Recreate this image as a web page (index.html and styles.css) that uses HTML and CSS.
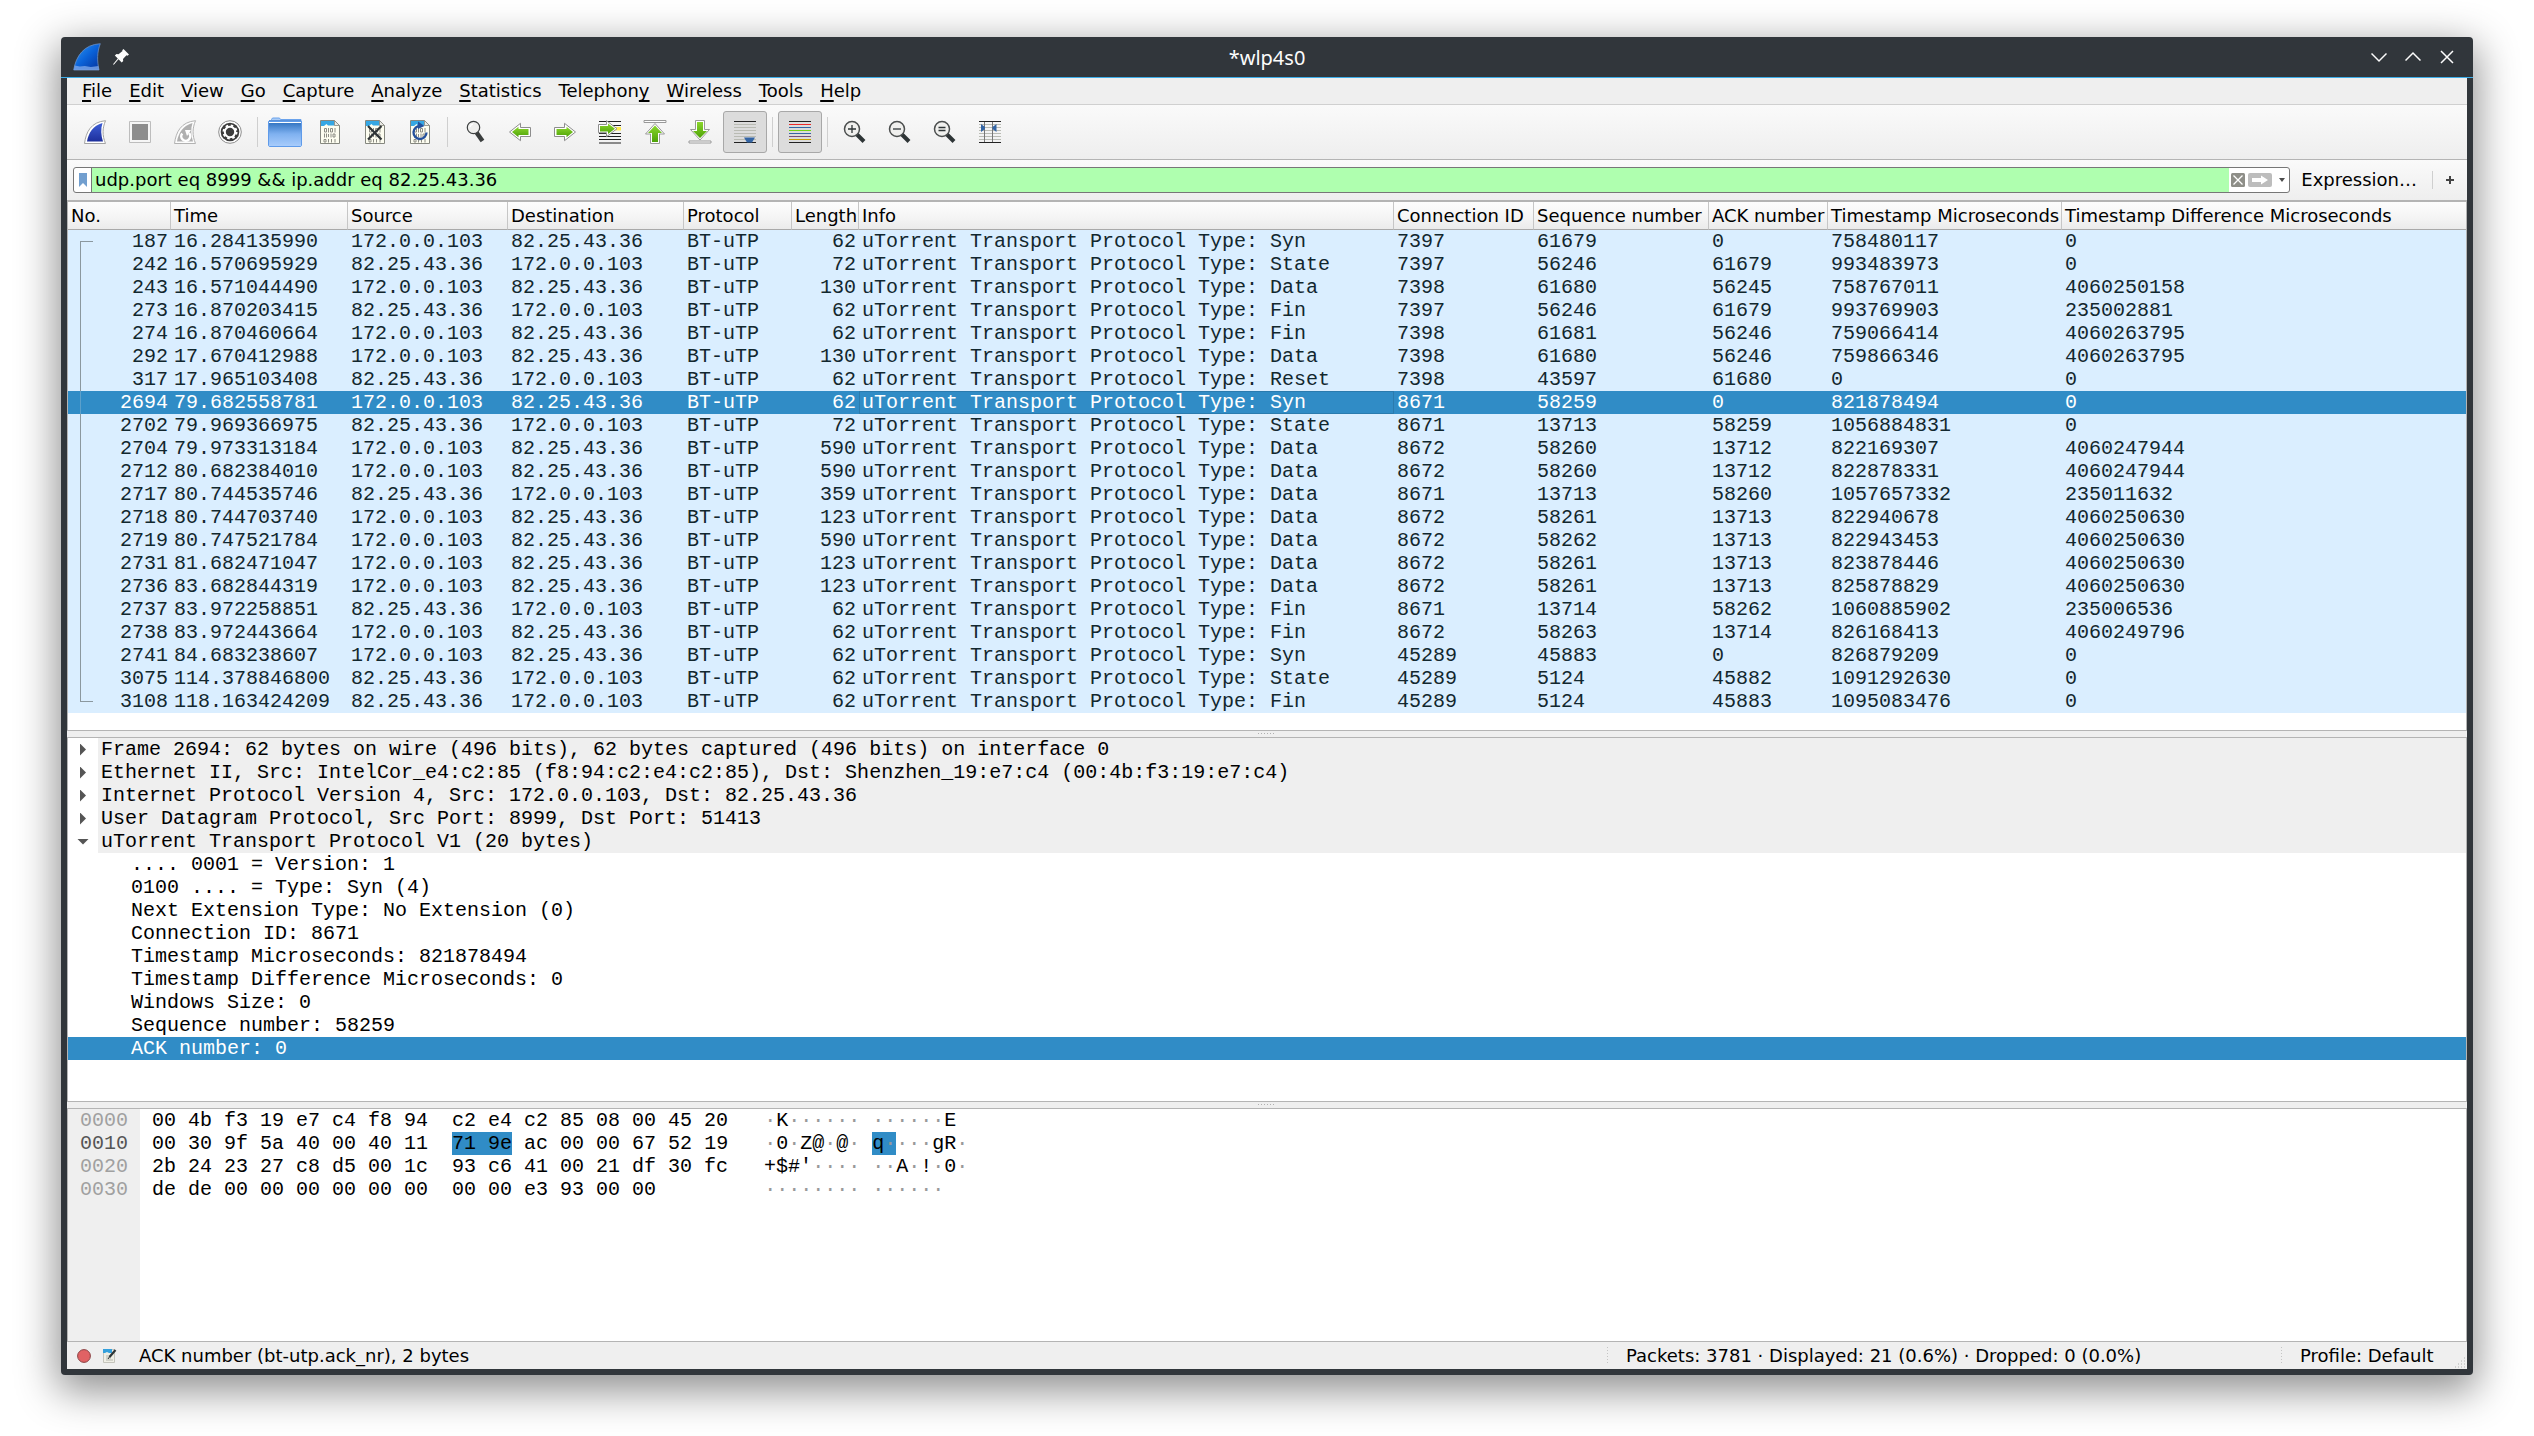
FILE: index.html
```html
<!DOCTYPE html>
<html lang="en">
<head>
<meta charset="utf-8">
<title>*wlp4s0</title>
<link rel="stylesheet" href="styles.css">
</head>
<body>
<svg class="defs" aria-hidden="true">
  <defs>
    <linearGradient id="fin-blue" x1="0" y1="0" x2="1" y2="1"><stop offset="0" stop-color="#2f9bf5"/><stop offset=".5" stop-color="#0a62d8"/><stop offset="1" stop-color="#04309a"/></linearGradient>
    <linearGradient id="fin-start" x1="0" y1="0" x2="0" y2="1"><stop offset="0" stop-color="#3d5ed6"/><stop offset="1" stop-color="#1d2f9c"/></linearGradient>
    <linearGradient id="folder" x1="0" y1="0" x2="0" y2="1"><stop offset="0" stop-color="#2c6fbd"/><stop offset=".5" stop-color="#7fb1f0"/><stop offset="1" stop-color="#a9cdfc"/></linearGradient>
    <linearGradient id="green" x1="0" y1="0" x2="0" y2="1"><stop offset="0" stop-color="#8bd62c"/><stop offset="1" stop-color="#4ea208"/></linearGradient>
    <symbol id="fin" viewBox="0 0 24 24"><path d="M1.500 23.500C3 12 8 2 22.500 .7 19.500 8 19 15 22.500 23.500z" fill="#fff" stroke="#a3a3a3"/></symbol>
    <symbol id="sheet" viewBox="0 0 24 24">
      <path d="M2.500 .5h14l5 5v18h-19z" fill="#fdfdf0" stroke="#85877f"/>
      <path d="M3 1h13.500v4.500H10L8.500 4 6 6H3z" fill="#35a7e4"/>
      <path d="M16.500 .5v5h5z" fill="#e9e9e4" stroke="#85877f" stroke-width=".8"/>
      <g fill="none" stroke="#8c8c84"><path d="M6.500 8.500h2v3.500h-2zM10.500 8v4.500M12.500 8.500h2v3.500h-2zM17 8v4.500M6.500 13.500v4M8.500 13.500v4M10.500 14v3M13 13.500v4M15 14h2v3h-2zM6 19.500h2v2.500H6zM10.500 19v3.500M13.500 19v3.500M17 19v3.500"/></g>
    </symbol>
    <symbol id="arrow-right" viewBox="0 0 24 20"><path d="M1.500 5.500h10V1.300L22.500 10 11.500 18.700V14.500h-10z" fill="#fff" stroke="#8d8d8d"/><path d="M3.500 7h10V4.800l6.500 5.200-6.500 5.200V13h-10z" fill="url(#green)"/></symbol>
    <symbol id="lens" viewBox="0 0 24 24"><path d="M13.500 14l7.500 7.500" stroke="#2e3436" stroke-width="4" stroke-linecap="butt"/><circle cx="9" cy="9" r="7.500" fill="#f0f0ee" stroke="#4b4e4e" stroke-width="1.500"/></symbol>
  </defs>
</svg>

<div class="window">
  <header class="titlebar">
    <div class="title-left">
      <svg width="28" height="28" viewBox="0 0 28 28"><path d="M.7 27C3 13 11 1.500 27.300 .7 24 9 24 18 26 27z" fill="url(#fin-blue)" stroke="#6d8fc0" stroke-width=".8"/><path d="M.8 27l1-4.500 5 1 5-.6 6 1 7.700-.9.500 4z" fill="#7ca6e8" opacity=".8"/></svg>
      <svg width="16" height="16" viewBox="0 0 16 16"><path d="M10.500 0L16 5.500l-1.500 1.200-1-.4L10 10l.2 2-1.500 1.500-3.200-3.200L.8 15.800 0 15.200l4.800-5.600-3-3L3.500 5l2 .2L9.500 2l-.3-.8z" fill="#fcfcfc"/></svg>
    </div>
    <h1 class="title">*wlp4s0</h1>
    <div class="title-right">
      <button class="win-button" aria-label="Minimize"><svg width="16" height="16" viewBox="0 0 16 16"><path d="M.5 4.500l7.500 7.500 7.500-7.500"/></svg></button>
      <button class="win-button" aria-label="Maximize"><svg width="16" height="16" viewBox="0 0 16 16"><path d="M.5 11.500L8 4l7.500 7.500"/></svg></button>
      <button class="win-button" aria-label="Close"><svg width="16" height="16" viewBox="0 0 16 16"><path d="M2 2l12 12M14 2L2 14"/></svg></button>
    </div>
  </header>

  <main class="content">
    <nav class="menubar">
      <button><u>F</u>ile</button><button><u>E</u>dit</button><button><u>V</u>iew</button><button><u>G</u>o</button><button><u>C</u>apture</button><button><u>A</u>nalyze</button><button><u>S</u>tatistics</button><button>Telephon<u>y</u></button><button><u>W</u>ireless</button><button><u>T</u>ools</button><button><u>H</u>elp</button>
    </nav>

    <div class="toolbar">
      <button class="tool" aria-label="Start capture"><svg width="24" height="24"><use href="#fin"/><path d="M4 21.500C5.500 13 10 5.500 19.500 3c-2 6-1.500 12.500.5 18.500z" fill="url(#fin-start)"/></svg></button>
      <button class="tool" aria-label="Stop capture"><svg width="24" height="24"><path d="M1.500 1.500h21v21h-21z" fill="#f6f6f6" stroke="#bdbdbd"/><path d="M4 4h16v16H4z" fill="#8d8d8d"/></svg></button>
      <button class="tool" aria-label="Restart capture"><svg width="24" height="24"><use href="#fin" opacity=".8"/><path d="M4 21.500C5.500 13 10 5.500 19.500 3c-2 6-1.500 12.500.5 18.500z" fill="#b0b0b0"/><path d="M9.200 13.500a4.500 4.500 0 1 0 6.800-.3" fill="none" stroke="#fff" stroke-width="2.500"/><path d="M12 10h6l-4 6z" fill="#fff"/></svg></button>
      <button class="tool" aria-label="Capture options"><svg width="24" height="24"><circle cx="12" cy="12" r="11.300" fill="#fff" stroke="#8d8d8d"/><circle cx="12" cy="12" r="9.300" fill="#3c3c3c"/><circle cx="12" cy="12" r="5.200" fill="none" stroke="#fff" stroke-width="2"/><circle cx="12" cy="12" r="6.500" fill="none" stroke="#fff" stroke-width="2" stroke-dasharray="2.500 2.605"/></svg></button>
      <span class="tool-sep"></span>
      <button class="tool" aria-label="Open"><svg width="34" height="30" viewBox="0 0 34 30"><path d="M3.500 5V2.500l1-1.500h7l1 1.500H33V6z" fill="#a9cbf6" stroke="#6ba3ec"/><path d="M.5 4.500h33v24.200l-.8.800H1.300l-.8-.8z" fill="url(#folder)" stroke="#5f9bea"/><path d="M1 3.500h32" stroke="#5a92da"/><path d="M1 5.500h32" stroke="#fff"/></svg></button>
      <button class="tool" aria-label="Save"><svg width="24" height="24"><use href="#sheet"/></svg></button>
      <button class="tool" aria-label="Close file"><svg width="24" height="24"><use href="#sheet"/><path d="M5 6l13.500 13.500M18.500 6L5 19.500" stroke="#2e3436" stroke-width="2.200"/></svg></button>
      <button class="tool" aria-label="Reload"><svg width="24" height="24"><use href="#sheet"/><path d="M12.500 6A6.500 6.500 0 1 0 18.500 12.500" fill="none" stroke="#24509c" stroke-width="2.300"/><path d="M10 1.500L16.500 6 10 9z" fill="#24509c"/></svg></button>
      <span class="tool-sep"></span>
      <button class="tool" aria-label="Find packet"><svg width="24" height="24"><path d="M13.500 12.500l6 8.500" stroke="#3a3d3d" stroke-width="4.500"/><circle cx="10.500" cy="7.500" r="6.200" fill="#efefed" stroke="#3c3f3f" stroke-width="1.200"/><path d="M7 7a4 4 0 0 1 3-3" stroke="#fff" fill="none" stroke-width="1.500"/></svg></button>
      <button class="tool" aria-label="Go back"><svg class="flip" width="24" height="20" viewBox="0 0 24 20"><use href="#arrow-right"/></svg></button>
      <button class="tool" aria-label="Go forward"><svg width="24" height="20" viewBox="0 0 24 20"><use href="#arrow-right"/></svg></button>
      <button class="tool" aria-label="Go to packet"><svg width="24" height="24"><path d="M1 1.500h22M1 5.500h22M1 13.500h22M1 16.500h22M1 19.500h22M1 23h22" stroke="#222"/><path d="M13 7h10v3.500H13z" fill="#fce94f"/><path d="M.5 4.500h8V.7l10.500 8-10.500 8v-4h-8z" fill="#fff" stroke="#8d8d8d"/><path d="M2 6h8V3.500l7 5.200-7 5.200V11.500H2z" fill="url(#green)"/></svg></button>
      <button class="tool" aria-label="First packet"><svg width="24" height="24"><path d="M1 .5h22v2H1z" fill="#fff" stroke="#999"/><path d="M12 3.500l9.500 10.500h-5v9.500h-9V14h-5z" fill="#fff" stroke="#999"/><path d="M12 5.500l7 7.500h-4v9H9v-9H5z" fill="url(#green)"/></svg></button>
      <button class="tool" aria-label="Last packet"><svg width="24" height="24"><path d="M1 21h22v2H1z" fill="#fff" stroke="#999"/><path d="M12 20l9.500-10.500h-5v-9h-9v9h-5z" fill="#fff" stroke="#999"/><path d="M12 18l7-7h-4V2H9v9H5z" fill="url(#green)"/></svg></button>
      <button class="tool tool-on" aria-label="Auto scroll" aria-pressed="true"><svg width="24" height="24"><path d="M1 4.500h22M1 7.500h22M1 10.500h22M1 13.500h22M1 16.500h22M1 19.500h22" stroke="#b9bbb3"/><path d="M1 1.500h22M1 22.500h22" stroke="#222"/><path d="M11 17.500h11l-3 5h-5z" fill="#3465a4"/></svg></button>
      <span class="tool-sep"></span>
      <button class="tool tool-on" aria-label="Colorize" aria-pressed="true"><svg width="24" height="24"><path d="M1 1.500h22M1 22.500h22" stroke="#222"/><path d="M1 4.500h22" stroke="#ef2929"/><path d="M1 7.500h22" stroke="#3465a4"/><path d="M1 10.500h22" stroke="#73d216"/><path d="M1 13.500h22" stroke="#3465a4"/><path d="M1 16.500h22" stroke="#75507b"/><path d="M1 19.500h22" stroke="#c4a000"/></svg></button>
      <span class="tool-sep"></span>
      <button class="tool" aria-label="Zoom in"><svg width="24" height="24"><use href="#lens"/><path d="M5 9h8M9 5v8" stroke="#2e3436" stroke-width="1.300"/></svg></button>
      <button class="tool" aria-label="Zoom out"><svg width="24" height="24"><use href="#lens"/><path d="M5 9h8" stroke="#2e3436" stroke-width="1.300"/></svg></button>
      <button class="tool" aria-label="Normal size"><svg width="24" height="24"><use href="#lens"/><path d="M5.500 7.500h7M5.500 10.500h7" stroke="#2e3436" stroke-width="1.300"/></svg></button>
      <button class="tool" aria-label="Resize columns"><svg width="24" height="24"><path d="M1 4.500h22M1 7.500h22M1 10.500h22M1 13.500h22M1 16.500h22M1 19.500h22" stroke="#b9bbb3"/><path d="M1 1.500h22M1 22.500h22" stroke="#222"/><path d="M6.500 2v20M14.500 2v20" stroke="#777"/><path d="M3 4l4 3v2l-4 3zM18.500 4l-4 3v2l4 3z" fill="#3465a4"/></svg></button>
    </div>

    <div class="filterbar">
      <div class="filter">
        <button class="bookmark" aria-label="Bookmarks"><svg width="8" height="14" viewBox="0 0 8 14"><path d="M0 0h8v14l-4-4-4 4z" fill="#729fcf"/></svg></button>
        <input class="filter-input" type="text" aria-label="Display filter" value="udp.port eq 8999 &amp;&amp; ip.addr eq 82.25.43.36">
        <div class="filter-actions">
          <button aria-label="Clear filter"><svg width="14" height="14" viewBox="0 0 14 14"><rect width="14" height="14" rx="1.500" fill="#8e8e88"/><path d="M2.500 2.500l9 9M11.500 2.500l-9 9" stroke="#fff" stroke-width="1.300"/></svg></button>
          <button aria-label="Apply filter"><svg width="24" height="14" viewBox="0 0 24 14"><rect width="24" height="14" rx="2" fill="#bdbdbd"/><path d="M4 5h9V2.500L20 7l-7 4.500V9H4z" fill="#fff"/></svg></button>
          <button class="history" aria-label="Filter history"><svg width="6" height="4" viewBox="0 0 6 4"><path d="M0 0h6L3 4z" fill="#4d4d4d"/></svg></button>
        </div>
      </div>
      <button class="expression">Expression…</button>
      <span class="filter-sep"></span>
      <button class="add" aria-label="Add filter button"><svg width="8" height="8" viewBox="0 0 8 8"><path d="M0 4h8M4 0v8" stroke="#444" stroke-width="2"/></svg></button>
    </div>

    <section class="pane packets">
      <table>
        <colgroup><col class="c-no"><col class="c-time"><col class="c-src"><col class="c-dst"><col class="c-proto"><col class="c-len"><col class="c-info"><col class="c-conn"><col class="c-seq"><col class="c-ack"><col class="c-ts"><col></colgroup>
        <thead><tr><th>No.</th><th>Time</th><th>Source</th><th>Destination</th><th>Protocol</th><th>Length</th><th>Info</th><th>Connection ID</th><th>Sequence number</th><th>ACK number</th><th>Timestamp Microseconds</th><th>Timestamp Difference Microseconds</th></tr></thead>
        <tbody>
          <tr><td>187</td><td>16.284135990</td><td>172.0.0.103</td><td>82.25.43.36</td><td>BT-uTP</td><td>62</td><td>uTorrent Transport Protocol Type: Syn</td><td>7397</td><td>61679</td><td>0</td><td>758480117</td><td>0</td></tr>
          <tr><td>242</td><td>16.570695929</td><td>82.25.43.36</td><td>172.0.0.103</td><td>BT-uTP</td><td>72</td><td>uTorrent Transport Protocol Type: State</td><td>7397</td><td>56246</td><td>61679</td><td>993483973</td><td>0</td></tr>
          <tr><td>243</td><td>16.571044490</td><td>172.0.0.103</td><td>82.25.43.36</td><td>BT-uTP</td><td>130</td><td>uTorrent Transport Protocol Type: Data</td><td>7398</td><td>61680</td><td>56245</td><td>758767011</td><td>4060250158</td></tr>
          <tr><td>273</td><td>16.870203415</td><td>82.25.43.36</td><td>172.0.0.103</td><td>BT-uTP</td><td>62</td><td>uTorrent Transport Protocol Type: Fin</td><td>7397</td><td>56246</td><td>61679</td><td>993769903</td><td>235002881</td></tr>
          <tr><td>274</td><td>16.870460664</td><td>172.0.0.103</td><td>82.25.43.36</td><td>BT-uTP</td><td>62</td><td>uTorrent Transport Protocol Type: Fin</td><td>7398</td><td>61681</td><td>56246</td><td>759066414</td><td>4060263795</td></tr>
          <tr><td>292</td><td>17.670412988</td><td>172.0.0.103</td><td>82.25.43.36</td><td>BT-uTP</td><td>130</td><td>uTorrent Transport Protocol Type: Data</td><td>7398</td><td>61680</td><td>56246</td><td>759866346</td><td>4060263795</td></tr>
          <tr><td>317</td><td>17.965103408</td><td>82.25.43.36</td><td>172.0.0.103</td><td>BT-uTP</td><td>62</td><td>uTorrent Transport Protocol Type: Reset</td><td>7398</td><td>43597</td><td>61680</td><td>0</td><td>0</td></tr>
          <tr class="selected"><td>2694</td><td>79.682558781</td><td>172.0.0.103</td><td>82.25.43.36</td><td>BT-uTP</td><td>62</td><td class="current">uTorrent Transport Protocol Type: Syn</td><td>8671</td><td>58259</td><td>0</td><td>821878494</td><td>0</td></tr>
          <tr><td>2702</td><td>79.969366975</td><td>82.25.43.36</td><td>172.0.0.103</td><td>BT-uTP</td><td>72</td><td>uTorrent Transport Protocol Type: State</td><td>8671</td><td>13713</td><td>58259</td><td>1056884831</td><td>0</td></tr>
          <tr><td>2704</td><td>79.973313184</td><td>172.0.0.103</td><td>82.25.43.36</td><td>BT-uTP</td><td>590</td><td>uTorrent Transport Protocol Type: Data</td><td>8672</td><td>58260</td><td>13712</td><td>822169307</td><td>4060247944</td></tr>
          <tr><td>2712</td><td>80.682384010</td><td>172.0.0.103</td><td>82.25.43.36</td><td>BT-uTP</td><td>590</td><td>uTorrent Transport Protocol Type: Data</td><td>8672</td><td>58260</td><td>13712</td><td>822878331</td><td>4060247944</td></tr>
          <tr><td>2717</td><td>80.744535746</td><td>82.25.43.36</td><td>172.0.0.103</td><td>BT-uTP</td><td>359</td><td>uTorrent Transport Protocol Type: Data</td><td>8671</td><td>13713</td><td>58260</td><td>1057657332</td><td>235011632</td></tr>
          <tr><td>2718</td><td>80.744703740</td><td>172.0.0.103</td><td>82.25.43.36</td><td>BT-uTP</td><td>123</td><td>uTorrent Transport Protocol Type: Data</td><td>8672</td><td>58261</td><td>13713</td><td>822940678</td><td>4060250630</td></tr>
          <tr><td>2719</td><td>80.747521784</td><td>172.0.0.103</td><td>82.25.43.36</td><td>BT-uTP</td><td>590</td><td>uTorrent Transport Protocol Type: Data</td><td>8672</td><td>58262</td><td>13713</td><td>822943453</td><td>4060250630</td></tr>
          <tr><td>2731</td><td>81.682471047</td><td>172.0.0.103</td><td>82.25.43.36</td><td>BT-uTP</td><td>123</td><td>uTorrent Transport Protocol Type: Data</td><td>8672</td><td>58261</td><td>13713</td><td>823878446</td><td>4060250630</td></tr>
          <tr><td>2736</td><td>83.682844319</td><td>172.0.0.103</td><td>82.25.43.36</td><td>BT-uTP</td><td>123</td><td>uTorrent Transport Protocol Type: Data</td><td>8672</td><td>58261</td><td>13713</td><td>825878829</td><td>4060250630</td></tr>
          <tr><td>2737</td><td>83.972258851</td><td>82.25.43.36</td><td>172.0.0.103</td><td>BT-uTP</td><td>62</td><td>uTorrent Transport Protocol Type: Fin</td><td>8671</td><td>13714</td><td>58262</td><td>1060885902</td><td>235006536</td></tr>
          <tr><td>2738</td><td>83.972443664</td><td>172.0.0.103</td><td>82.25.43.36</td><td>BT-uTP</td><td>62</td><td>uTorrent Transport Protocol Type: Fin</td><td>8672</td><td>58263</td><td>13714</td><td>826168413</td><td>4060249796</td></tr>
          <tr><td>2741</td><td>84.683238607</td><td>172.0.0.103</td><td>82.25.43.36</td><td>BT-uTP</td><td>62</td><td>uTorrent Transport Protocol Type: Syn</td><td>45289</td><td>45883</td><td>0</td><td>826879209</td><td>0</td></tr>
          <tr><td>3075</td><td>114.378846800</td><td>82.25.43.36</td><td>172.0.0.103</td><td>BT-uTP</td><td>62</td><td>uTorrent Transport Protocol Type: State</td><td>45289</td><td>5124</td><td>45882</td><td>1091292630</td><td>0</td></tr>
          <tr><td>3108</td><td>118.163424209</td><td>82.25.43.36</td><td>172.0.0.103</td><td>BT-uTP</td><td>62</td><td>uTorrent Transport Protocol Type: Fin</td><td>45289</td><td>5124</td><td>45883</td><td>1095083476</td><td>0</td></tr>
        </tbody>
      </table>
    </section>

    <div class="splitter"><i></i></div>

    <section class="pane details">
      <ul class="tree">
        <li class="node"><span class="twisty closed"></span><span class="label">Frame 2694: 62 bytes on wire (496 bits), 62 bytes captured (496 bits) on interface 0</span></li>
        <li class="node"><span class="twisty closed"></span><span class="label">Ethernet II, Src: IntelCor_e4:c2:85 (f8:94:c2:e4:c2:85), Dst: Shenzhen_19:e7:c4 (00:4b:f3:19:e7:c4)</span></li>
        <li class="node"><span class="twisty closed"></span><span class="label">Internet Protocol Version 4, Src: 172.0.0.103, Dst: 82.25.43.36</span></li>
        <li class="node"><span class="twisty closed"></span><span class="label">User Datagram Protocol, Src Port: 8999, Dst Port: 51413</span></li>
        <li class="node"><span class="twisty open"></span><span class="label">uTorrent Transport Protocol V1 (20 bytes)</span></li>
        <li class="leaf">.... 0001 = Version: 1</li>
        <li class="leaf">0100 .... = Type: Syn (4)</li>
        <li class="leaf">Next Extension Type: No Extension (0)</li>
        <li class="leaf">Connection ID: 8671</li>
        <li class="leaf">Timestamp Microseconds: 821878494</li>
        <li class="leaf">Timestamp Difference Microseconds: 0</li>
        <li class="leaf">Windows Size: 0</li>
        <li class="leaf">Sequence number: 58259</li>
        <li class="leaf selected">ACK number: 0</li>
      </ul>
    </section>

    <div class="splitter"><i></i></div>

    <section class="pane bytes">
      <ol class="offsets"><li>0000</li><li class="active">0010</li><li>0020</li><li>0030</li></ol>
      <ol class="hex">
        <li>00 4b f3 19 e7 c4 f8 94  c2 e4 c2 85 08 00 45 20   <i>·</i>K<i>······</i> <i>······</i>E</li>
        <li>00 30 9f 5a 40 00 40 11  <mark>71 9e</mark> ac 00 00 67 52 19   <i>·</i>0<i>·</i>Z@<i>·</i>@<i>·</i> <mark>q<i>·</i></mark><i>···</i>gR<i>·</i></li>
        <li>2b 24 23 27 c8 d5 00 1c  93 c6 41 00 21 df 30 fc   +$#'<i>····</i> <i>··</i>A<i>·</i>!<i>·</i>0<i>·</i></li>
        <li>de de 00 00 00 00 00 00  00 00 e3 93 00 00         <i>········</i> <i>······</i></li>
      </ol>
    </section>

    <footer class="statusbar">
      <div class="status-main">
        <button aria-label="Expert information"><svg width="14" height="14" viewBox="0 0 14 14"><circle cx="7" cy="7" r="6.400" fill="#e06264" stroke="#8a4446"/></svg></button>
        <button aria-label="Capture comment"><svg width="14" height="14" viewBox="0 0 14 14"><path d="M.5 .5h11v13H.5z" fill="#efefe6" stroke="#c4c4bc"/><path d="M0 0h9v4H6L4 3 2 4H0z" fill="#35a0dc"/><path d="M3 7h4M3 9h5M3 11h7" stroke="#b5b5ad"/><path d="M12.500 1L6.500 8" stroke="#2e3436" stroke-width="2.200"/><path d="M6.800 7.500L5 10" stroke="#2e3436"/></svg></button>
        <span>ACK number (bt-utp.ack_nr), 2 bytes</span>
      </div>
      <div class="status-cell">Packets: 3781 · Displayed: 21 (0.6%) · Dropped: 0 (0.0%)</div>
      <div class="status-cell profile">Profile: Default
        <svg class="grip" width="12" height="12" viewBox="0 0 12 12"><path d="M0 11h12M3 8h9M6 5h6M9 2h3" stroke="#b0b0b0" stroke-dasharray="1 2"/></svg>
      </div>
    </footer>
  </main>
</div>
</body>
</html>
```
FILE: styles.css
```css
* { box-sizing: border-box; }

body {
  margin: 0;
  min-height: 100vh;
  padding: 37px 61px 61px;
  display: flex;
  background: #fff;
  color: #000;
  font: 18px/26px "DejaVu Sans", sans-serif;
}

button {
  margin: 0;
  padding: 0;
  border: 0;
  background: none;
  color: inherit;
  font: inherit;
}

svg { display: block; }
.defs { position: absolute; width: 0; height: 0; }

/* Window frame */
.window {
  flex: 1;
  min-width: 0;
  display: flex;
  flex-direction: column;
  border-radius: 4px;
  background: #31363b;
  box-shadow: 0 12px 40px 4px rgba(0, 0, 0, .44);
}

.titlebar {
  height: 41px;
  display: grid;
  grid-template-columns: 1fr auto 1fr;
  align-items: center;
  border-bottom: 1px solid #3daee9;
}
.title-left { display: flex; align-items: center; gap: 12px; padding-left: 12px; }
.title { margin: 0; padding-top: 2px; color: #fcfcfc; font: 20px/26px "Noto Sans", sans-serif; }
.title-right { display: flex; justify-content: flex-end; gap: 18px; padding-right: 18px; }
.win-button path { fill: none; stroke: #fcfcfc; stroke-width: 1.5; }

.content {
  flex: 1;
  margin: 0 6px 6px;
  display: flex;
  flex-direction: column;
  background: #efefef;
}

/* Menu bar */
.menubar {
  display: flex;
  padding-left: 7px;
  border-bottom: 1px solid #d0d0d0;
}
.menubar button { height: 26px; padding: 0 9px 0 8px; }
.menubar u { text-decoration-thickness: 2px; text-underline-offset: 3px; text-decoration-skip-ink: none; }

/* Toolbars */
.toolbar {
  display: flex;
  gap: 1px;
  padding: 6px;
  background: linear-gradient(#fafafa, #eee);
  border-bottom: 1px solid #b4b4b4;
}
.tool {
  width: 44px;
  height: 42px;
  display: grid;
  place-items: center;
  border: 1px solid transparent;
  border-radius: 3px;
}
.tool-on { background: #dcdcdc; border-color: #a8a8a8; }
.tool-sep {
  width: 9px;
  margin: 6px 0;
  background: linear-gradient(#cfcfcf, #cfcfcf) center / 1px 100% no-repeat;
}
.flip { transform: scaleX(-1); }

.filterbar {
  display: flex;
  align-items: center;
  padding: 7px 13px 7px 6px;
  background: linear-gradient(#fafafa, #eee);
}
.filter {
  flex: 1;
  height: 26px;
  display: flex;
  border: 1px solid #777;
  border-radius: 3px;
  background: #fff;
  overflow: hidden;
}
.bookmark { width: 18px; display: grid; place-items: center; border-right: 1px solid #777; }
.filter-input {
  flex: 1;
  min-width: 0;
  border: 0;
  padding: 0 3px;
  background: #afffaf;
  color: #000;
  font: inherit;
}
.filter-actions { display: flex; align-items: center; gap: 3px; padding-left: 2px; }
.history { width: 14px; display: grid; place-items: center; }
.expression { margin: 0 15px 0 11px; }
.filter-sep { width: 1px; height: 18px; background: #cfcfcf; }
.add { margin-left: 13px; }

/* Panes */
.pane {
  background: #fff;
  border: 1px solid #b4b4b4;
  font: 20px/23px "Liberation Mono", monospace;
}
.splitter { height: 6px; padding-top: 2px; }
.splitter i {
  display: block;
  width: 18px;
  height: 1px;
  margin: 0 auto;
  background: repeating-linear-gradient(90deg, #b0b0b0 0 1px, transparent 1px 3px);
}

/* Packet list */
.packets { padding-bottom: 17px; border-top-width: 2px; }
table { width: 100%; table-layout: fixed; border-collapse: separate; border-spacing: 0; }
.c-no { width: 103px; }
.c-time { width: 177px; }
.c-src { width: 160px; }
.c-dst { width: 176px; }
.c-proto { width: 108px; }
.c-len { width: 67px; }
.c-info { width: 535px; }
.c-conn { width: 140px; }
.c-seq { width: 175px; }
.c-ack { width: 119px; }
.c-ts { width: 234px; }
th, td { padding: 0 0 0 3px; text-align: left; white-space: nowrap; }
th {
  height: 28px;
  border-right: 1px solid #c6c6c6;
  border-bottom: 1px solid #a9a9a9;
  background: linear-gradient(#fdfdfd, #f4f4f4 60%, #ebebeb);
  font: 18px/26px "DejaVu Sans", sans-serif;
}
th:last-child { border-right: 0; }
td { height: 23px; background: #daeeff; color: #12272e; }
td:nth-child(1), td:nth-child(6) { padding: 0 3px 0 0; text-align: right; }
td:first-child { position: relative; }
td:first-child::before {
  content: "";
  position: absolute;
  left: 12px;
  top: 0;
  bottom: 0;
  width: 12px;
  border-left: 1px solid #8b989f;
}
tr:first-child td::before { top: 11px; border-top: 1px solid #8b989f; }
tr:last-child td::before { bottom: 11px; border-bottom: 1px solid #8b989f; }
.selected td, .leaf.selected { background: #308cc6; color: #fff; }
.selected td:first-child::before { border-color: #5ca0cb; }
.selected .current { box-shadow: inset 0 0 0 1px #2a7bae; }

/* Packet details */
.details { padding-bottom: 41px; }
.tree { margin: 0; padding: 0; list-style: none; }
.node { display: flex; }
.twisty { width: 30px; display: grid; place-items: center; }
.twisty::before { content: ""; background: #555; }
.closed::before { width: 6px; height: 12px; clip-path: polygon(0 0, 100% 50%, 0 100%); }
.open::before { width: 12px; height: 6px; clip-path: polygon(0 0, 100% 0, 50% 100%); }
.label { flex: 1; padding-left: 3px; background: #efefef; }
.leaf { padding-left: 63px; }

/* Packet bytes */
.bytes { flex: 1; display: flex; }
.bytes ol { margin: 0; padding: 0 12px; list-style: none; }
.bytes li { height: 23px; white-space: pre; }
.offsets { background: #efefef; color: #a0a0a0; }
.offsets .active { color: #555; }
.hex i { color: #999; font-style: normal; }
.hex mark { background: #308cc6; color: #000; }

/* Status bar */
.statusbar {
  display: grid;
  grid-template-columns: 1540fr 674fr 186fr;
  line-height: 27px;
  white-space: nowrap;
}
.status-main { display: flex; align-items: center; gap: 12px; padding-left: 10px; }
.status-main span { padding-left: 10px; }
.status-cell {
  padding-left: 19px;
  background: repeating-linear-gradient(#c4c4c4 0 1px, transparent 1px 3px) 0 5px / 1px 17px no-repeat;
}
.profile { display: flex; justify-content: space-between; }
.grip { align-self: flex-end; margin-bottom: 1px; }
```
